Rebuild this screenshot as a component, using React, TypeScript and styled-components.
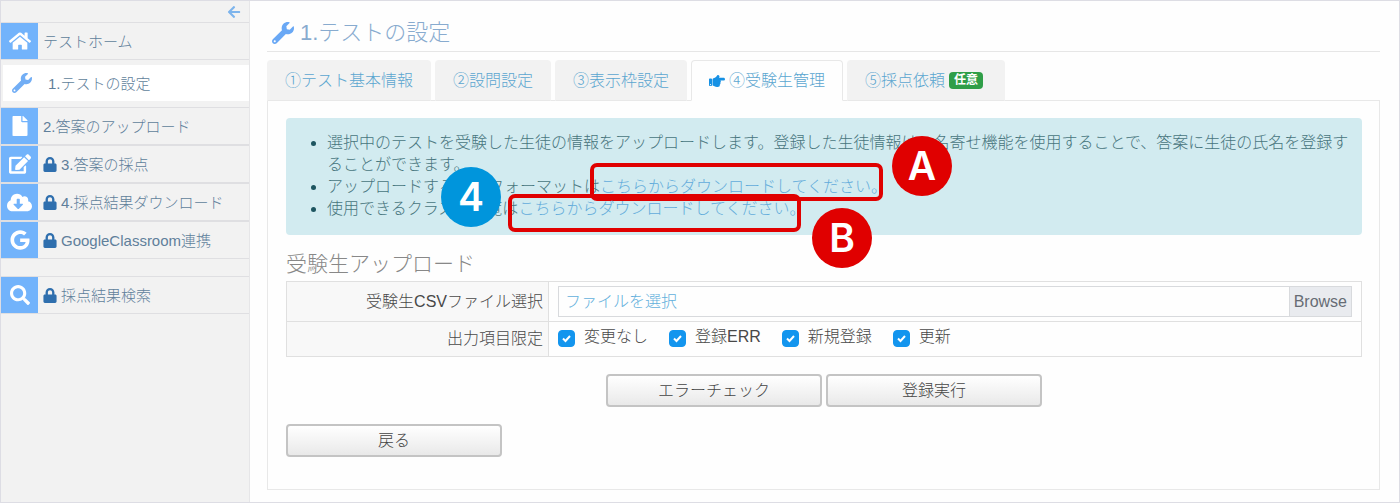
import React from "react";
import styled, { createGlobalStyle, css } from "styled-components";
import {
  FaArrowLeft,
  FaCloudDownloadAlt,
  FaEdit,
  FaFile,
  FaGoogle,
  FaHandPointRight,
  FaHome,
  FaLock,
  FaSearch,
  FaWrench,
} from "react-icons/fa";

const GlobalStyle = createGlobalStyle`
  *, *::before, *::after { box-sizing: border-box; }
  body {
    margin: 0;
    background: #fefefe;
    color: #484848;
    font-family: "Liberation Sans", "Noto Sans CJK JP", sans-serif;
    font-size: 16px;
    font-weight: 300;
    line-height: 22px;
  }
  button, input { font: inherit; }
  a { color: inherit; text-decoration: none; }
`;

const Page = styled.div`
  display: flex;
  min-height: 100vh;
  border: 1px solid #dddde4;
`;

const Sidebar = styled.nav`
  flex: 0 0 249px;
  background: #f2f2f2;
  border-right: 1px solid #e6e6e8;
`;

const CollapseButton = styled.button`
  display: flex;
  align-items: center;
  justify-content: flex-end;
  width: 100%;
  height: 21px;
  padding: 0 8px;
  border: 0;
  background: none;
  color: #7db4ec;
  font-size: 14px;
`;

const MenuIcon = styled.span`
  display: flex;
  align-items: center;
  justify-content: center;
  flex: 0 0 37px;
  align-self: stretch;
  margin-right: 5px;
  background: #72b3fb;
  color: #fff;
  font-size: 20px;
`;

const MenuLabel = styled.span`
  padding-top: 2px;
`;

const MenuItem = styled.a<{ $active?: boolean; $spaced?: boolean }>`
  display: flex;
  align-items: center;
  height: 38px;
  margin-top: ${(p) => (p.$spaced ? "17px" : "0")};
  border-top: 1px solid #dfdfe2;
  border-bottom: 1px solid #dfdfe2;
  color: #5f7f9b;
  font-size: 15px;
  white-space: nowrap;

  ${(p) =>
    p.$active &&
    css`
      height: 36px;
      margin: 5px 0 6px 2px;
      border: 0;
      background: #fff;
      ${MenuIcon} {
        margin-right: 8px;
        background: none;
        color: #72aef5;
      }
    `}
`;

const Lock = styled(FaLock)`
  width: 14px;
  height: 15px;
  margin-right: 4px;
  color: #2f6fae;
`;

const Main = styled.main`
  flex: 1;
  min-width: 0;
  padding: 10px 19px 12px 17px;
`;

const PageTitle = styled.h1`
  display: flex;
  align-items: center;
  gap: 6px;
  height: 41px;
  margin: 0 0 8px;
  padding: 4px 0 0 5px;
  border-bottom: 1px solid #e6e6e6;
  color: #88abcf;
  font-size: 22px;
  font-weight: 300;

  svg { color: #69a8f5; }
`;

const Tabs = styled.div`
  display: flex;
  gap: 4px;
`;

const Tab = styled.button<{ $active?: boolean }>`
  display: flex;
  align-items: center;
  gap: 4px;
  height: 41px;
  margin-bottom: -1px;
  padding: 0 17px;
  border: 1px solid ${(p) => (p.$active ? "#e8e8e8" : "#f2f2f2")};
  border-bottom-color: ${(p) => (p.$active ? "#fefefe" : "#e8e8e8")};
  border-radius: 4px 4px 0 0;
  background: ${(p) => (p.$active ? "#fefefe" : "#f2f2f2")};
  color: #5ba6d0;
  white-space: nowrap;

  svg { color: #1691e4; }
`;

const Optional = styled.span`
  height: 17px;
  margin-right: 4px;
  padding: 0 5px;
  border-radius: 4px;
  background: #2f9e48;
  color: #fff;
  font-size: 12px;
  font-weight: 700;
  line-height: 17px;
`;

const Panel = styled.section`
  padding: 17px 17px 32px 18px;
  border: 1px solid #e8e8e8;
  background: #fefefe;
`;

const Notice = styled.div`
  position: relative;
  padding: 14px 8px 15px 0;
  border-radius: 4px;
  background: #d2ebf0;
  color: #47757d;

  ul { margin: 0; padding-left: 41px; }
  li::marker { color: #1d5560; }
`;

const DownloadLink = styled.a<{ $frameTop: number }>`
  position: relative;
  display: inline-block;
  color: #62acdb;

  &::after {
    content: "";
    position: absolute;
    top: ${(p) => p.$frameTop}px;
    left: -10px;
    right: 4px;
    height: 38px;
    border: 4px solid #e00000;
    border-radius: 7px;
  }
`;

const Marker = styled.span<{ $x: number; $y: number; $color: string }>`
  position: absolute;
  top: ${(p) => p.$y}px;
  left: ${(p) => p.$x}px;
  width: 60px;
  height: 60px;
  border-radius: 50%;
  background: ${(p) => p.$color};
  color: #fff;
  font-family: Inter, sans-serif;
  font-size: 39px;
  font-weight: 600;
  line-height: 60px;
  text-align: center;
`;

const SectionTitle = styled.h2`
  margin: 17px 0 5px;
  color: #888;
  font-size: 21px;
  font-weight: 300;
  line-height: 24px;
`;

const FormTable = styled.table`
  width: 100%;
  border-collapse: collapse;
  table-layout: fixed;

  th, td { border: 1px solid #e0e0e0; }
  th {
    width: 262px;
    padding: 0 5px;
    background: #f8f8f8;
    font-weight: 300;
    text-align: right;
  }
  td { padding: 4px 9px; }
`;

const FileField = styled.label`
  position: relative;
  display: flex;
  height: 31px;
  border: 1px solid #d8dadd;
  color: #62b0dc;
  line-height: 29px;

  input {
    position: absolute;
    inset: 0;
    width: 100%;
    opacity: 0;
  }
`;

const FileName = styled.span`
  flex: 1;
  padding: 0 6px;
`;

const Browse = styled.span`
  padding: 0 4px;
  border-left: 1px solid #d8dadd;
  background: #e9ebef;
  color: #666c74;
`;

const Options = styled.div`
  display: flex;
  gap: 21px;
  height: 26px;
`;

const Option = styled.label`
  display: flex;
  gap: 9px;
`;

const CheckboxWrap = styled.span`
  position: relative;
  display: block;

  svg {
    position: absolute;
    top: 8px;
    left: 4px;
    visibility: hidden;
    pointer-events: none;
  }
  input:checked + svg { visibility: visible; }
`;

const Checkbox = styled.input`
  appearance: none;
  display: block;
  width: 17px;
  height: 17px;
  margin: 4px 0 0;
  border: 1px solid #1395ee;
  border-radius: 4px;
  background: #fff;

  &:checked { background: #1395ee; }
`;

const Actions = styled.div<{ $center?: boolean }>`
  display: flex;
  justify-content: ${(p) => (p.$center ? "center" : "flex-start")};
  gap: 4px;
  margin-top: 17px;
`;

const ActionButton = styled.button`
  width: 216px;
  height: 33px;
  padding: 0;
  border: 2px solid #c4c4c4;
  border-radius: 4px;
  background: linear-gradient(#fff, #e9e9e9);
  color: #444;
  line-height: 22px;
`;

type MenuEntry = {
  label: string;
  icon: React.ReactNode;
  active?: boolean;
  locked?: boolean;
  spaced?: boolean;
};

const menu: MenuEntry[] = [
  { label: "テストホーム", icon: <FaHome size={22} /> },
  { label: "1.テストの設定", icon: <FaWrench />, active: true },
  { label: "2.答案のアップロード", icon: <FaFile /> },
  { label: "3.答案の採点", icon: <FaEdit size={22} />, locked: true },
  { label: "4.採点結果ダウンロード", icon: <FaCloudDownloadAlt size={25} />, locked: true },
  { label: "GoogleClassroom連携", icon: <FaGoogle />, locked: true },
  { label: "採点結果検索", icon: <FaSearch />, locked: true, spaced: true },
];

const outputOptions = ["変更なし", "登録ERR", "新規登録", "更新"];

export default function App() {
  return (
    <>
      <GlobalStyle />
      <Page>
        <Sidebar>
          <CollapseButton aria-label="メニューを閉じる">
            <FaArrowLeft />
          </CollapseButton>
          {menu.map((m) => (
            <MenuItem key={m.label} href="#" $active={m.active} $spaced={m.spaced}>
              <MenuIcon>{m.icon}</MenuIcon>
              {m.locked && <Lock />}
              <MenuLabel>{m.label}</MenuLabel>
            </MenuItem>
          ))}
        </Sidebar>
        <Main>
          <PageTitle>
            <FaWrench />
            1.テストの設定
          </PageTitle>
          <Tabs role="tablist">
            <Tab role="tab">①テスト基本情報</Tab>
            <Tab role="tab">②設問設定</Tab>
            <Tab role="tab">③表示枠設定</Tab>
            <Tab role="tab" aria-selected $active>
              <FaHandPointRight />
              ④受験生管理
            </Tab>
            <Tab role="tab">
              ⑤採点依頼
              <Optional>任意</Optional>
            </Tab>
          </Tabs>
          <Panel>
            <Notice>
              <ul>
                <li>
                  選択中のテストを受験した生徒の情報をアップロードします。登録した生徒情報は、名寄せ機能を使用することで、答案に生徒の氏名を登録することができます。
                </li>
                <li>
                  アップロードするCSVフォーマットは
                  <DownloadLink href="#" $frameTop={-13}>
                    こちらからダウンロードしてください。
                  </DownloadLink>
                </li>
                <li>
                  使用できるクラス名一覧は
                  <DownloadLink href="#" $frameTop={-4}>
                    こちらからダウンロードしてください。
                  </DownloadLink>
                </li>
              </ul>
              <Marker $x={155} $y={49} $color="#0095dc">4</Marker>
              <Marker $x={606} $y={18} $color="#e00000">A</Marker>
              <Marker $x={526} $y={90} $color="#e00000">B</Marker>
            </Notice>
            <SectionTitle>受験生アップロード</SectionTitle>
            <FormTable>
              <tbody>
                <tr>
                  <th scope="row">受験生CSVファイル選択</th>
                  <td>
                    <FileField>
                      <FileName>ファイルを選択</FileName>
                      <Browse>Browse</Browse>
                      <input type="file" accept=".csv" aria-label="受験生CSVファイル選択" />
                    </FileField>
                  </td>
                </tr>
                <tr>
                  <th scope="row">出力項目限定</th>
                  <td>
                    <Options>
                      {outputOptions.map((o) => (
                        <Option key={o}>
                          <CheckboxWrap>
                            <Checkbox type="checkbox" defaultChecked />
                            <svg width="9" height="9" viewBox="0 0 9 9" fill="none" stroke="#fff" strokeWidth="2">
                              <path d="M1 4.5 3.5 7 8 2" />
                            </svg>
                          </CheckboxWrap>
                          {o}
                        </Option>
                      ))}
                    </Options>
                  </td>
                </tr>
              </tbody>
            </FormTable>
            <Actions $center>
              <ActionButton>エラーチェック</ActionButton>
              <ActionButton>登録実行</ActionButton>
            </Actions>
            <Actions>
              <ActionButton>戻る</ActionButton>
            </Actions>
          </Panel>
        </Main>
      </Page>
    </>
  );
}
